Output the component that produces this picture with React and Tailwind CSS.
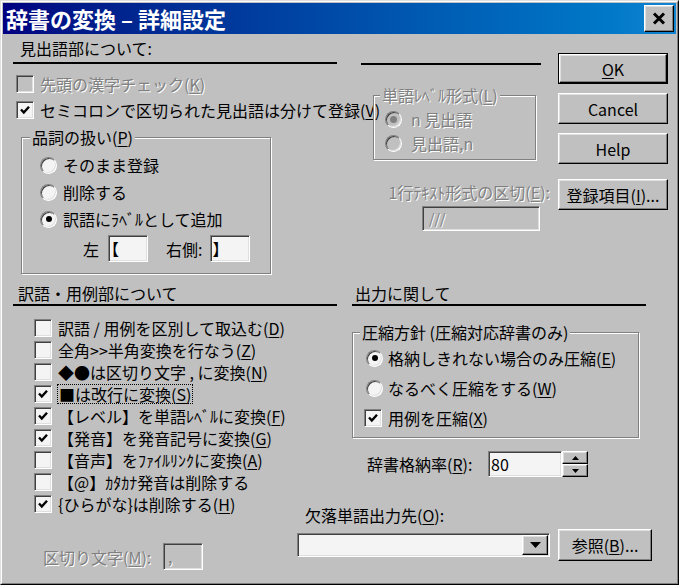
import React from 'react'

// Win9x 風の立体枠
const raised =
  'border border-t-white border-l-white border-r-black border-b-black shadow-[inset_-1px_-1px_0_#808080,inset_1px_1px_0_#dfdfdf]'
const sunken =
  'border border-t-[#808080] border-l-[#808080] border-r-white border-b-white shadow-[inset_1px_1px_0_#404040,inset_-1px_-1px_0_#dfdfdf]'
const dim = 'text-[#808080] [text-shadow:1px_1px_0_#fff]'

const U = ({ children }) => <span className="underline underline-offset-[2px]">{children}</span>

function Check({ checked, disabled }) {
  return (
    <div
      className={`w-[18px] h-[18px] shrink-0 flex items-center justify-center ${sunken} ${
        disabled ? 'bg-[#c0c0c0]' : 'bg-[#f4f4f4]'
      }`}
    >
      {checked && (
        <svg width="12" height="12" viewBox="0 0 12 12">
          <path d="M2 5.5 L4.8 8.5 L10 2.8" stroke="#000" strokeWidth="2.4" fill="none" />
        </svg>
      )}
    </div>
  )
}

function Radio({ on, disabled }) {
  return (
    <div
      className={`w-[17px] h-[17px] shrink-0 rounded-full flex items-center justify-center ${sunken} ${
        disabled ? 'bg-[#c0c0c0]' : 'bg-[#f4f4f4]'
      }`}
    >
      {on && <div className={`rounded-full ${disabled ? 'w-[7px] h-[7px] bg-[#808080]' : 'w-[6px] h-[6px] bg-black'}`} />}
    </div>
  )
}

function Group({ label, disabled, className = '', legendClass = 'ml-[8px]', children }) {
  return (
    <fieldset
      className={`border border-[#808080] shadow-[inset_1px_1px_0_#fff,1px_1px_0_#fff] ${className}`}
    >
      <legend className={`px-[2px] leading-[20px] bg-[#c0c0c0] whitespace-nowrap ${legendClass} ${disabled ? dim : ''}`}>
        {label}
      </legend>
      {children}
    </fieldset>
  )
}

function Btn({ children, className = '', def }) {
  const inner = (
    <div className={`w-full h-full flex items-center justify-center bg-[#c0c0c0] ${raised}`}>{children}</div>
  )
  return def ? (
    <div className={`border border-black ${className}`}>{inner}</div>
  ) : (
    <div className={className}>{inner}</div>
  )
}

function CheckRow({ checked, children, focus }) {
  return (
    <div className="h-[18px] flex items-center whitespace-nowrap">
      <Check checked={checked} />
      <span className={`ml-[6px] leading-[18px] ${focus ? 'outline outline-1 outline-dotted outline-black px-px' : ''}`}>
        {children}
      </span>
    </div>
  )
}

export default function App() {
  return (
    <div className="w-[679px] h-[585px] border border-t-[#dfdfdf] border-l-[#dfdfdf] border-r-black border-b-black font-['Noto_Sans_CJK_JP',sans-serif] text-[16px] text-black">
      <div className="h-full border border-t-white border-l-white border-r-[#808080] border-b-[#808080] bg-[#c0c0c0] p-px flex flex-col">
        {/* タイトルバー */}
        <div className="h-[31px] shrink-0 flex items-center justify-between bg-linear-to-r from-[#000080] to-[#1084d0]">
          <span className="pl-[3px] text-white font-bold text-[22px] leading-[31px] whitespace-nowrap">
            辞書の変換 – 詳細設定
          </span>
          <div className={`mr-[2px] w-[30px] h-[27px] flex items-center justify-center bg-[#c0c0c0] ${raised}`}>
            <svg width="14" height="13" viewBox="0 0 14 13">
              <path d="M2 1.5 L12 11.5 M12 1.5 L2 11.5" stroke="#000" strokeWidth="3" />
            </svg>
          </div>
        </div>

        <div className="flex-1 flex flex-col pl-[10px]">
          {/* 上段 */}
          <div className="h-[249px] shrink-0 flex">
            <div className="w-[324px]">
              <div className="pt-[4px] pl-[7px] leading-[20px]">見出語部について:</div>
              <div className="mt-[4px] h-[2px] bg-black" />
              <div className="mt-[11px] h-[18px] pl-[3px] flex items-center whitespace-nowrap">
                <Check disabled />
                <span className={`ml-[6px] ${dim}`}>
                  先頭の漢字チェック(<U>K</U>)
                </span>
              </div>
              <div className="mt-[8px] h-[18px] pl-[3px] flex items-center whitespace-nowrap">
                <Check checked />
                <span className="ml-[6px]">
                  セミコロンで区切られた見出語は分けて登録(<U>V</U>)
                </span>
              </div>
              <Group label={<>品詞の扱い(<U>P</U>)</>} className="mt-[8px] ml-[8px] w-[250px]">
                <div className="pl-[18px] pb-[11px]">
                  <div className="mt-[8px] h-[20px] flex items-center gap-[6px]">
                    <Radio />
                    <span>そのまま登録</span>
                  </div>
                  <div className="mt-[7px] h-[20px] flex items-center gap-[6px]">
                    <Radio />
                    <span>削除する</span>
                  </div>
                  <div className="mt-[7px] h-[20px] flex items-center gap-[6px] whitespace-nowrap">
                    <Radio on />
                    <span>訳語にﾗﾍﾞﾙとして追加</span>
                  </div>
                  <div className="mt-[6px] h-[27px] flex items-center pl-[43px] whitespace-nowrap">
                    <span>左</span>
                    <div className={`ml-[9px] w-[40px] h-[27px] bg-[#f4f4f4] leading-[25px] ${sunken}`}>
                      <span className="inline-block -ml-[6px]">【</span>
                    </div>
                    <span className="ml-[18px]">右側:</span>
                    <div className={`ml-[8px] w-[40px] h-[27px] bg-[#f4f4f4] pl-[1px] leading-[25px] ${sunken}`}>】</div>
                  </div>
                </div>
              </Group>
            </div>

            <div className="ml-[24px] w-[189px] flex flex-col">
              <div className="mt-[29px] w-[180px] h-[2px] bg-black" />
              <Group
                label={<>単語ﾚﾍﾞﾙ形式(<U>L</U>)</>}
                disabled
                legendClass="ml-[6px]"
                className="mt-[20px] ml-[12px] w-[163px]"
              >
                <div className="pl-[11px] pb-[6px]">
                  <div className="mt-[4px] h-[20px] flex items-center gap-[9px]">
                    <Radio on disabled />
                    <span className={dim}>n 見出語</span>
                  </div>
                  <div className="mt-[4px] h-[20px] flex items-center gap-[9px]">
                    <Radio disabled />
                    <span className={dim}>見出語,n</span>
                  </div>
                </div>
              </Group>
              <div className={`mt-[22px] leading-[20px] text-right whitespace-nowrap ${dim}`}>
                1行ﾃｷｽﾄ形式の区切(<U>E</U>):
              </div>
              <div className={`mt-[4px] self-end mr-[10px] w-[118px] h-[25px] bg-[#c0c0c0] pl-[6px] leading-[23px] text-[14px] ${dim} ${sunken}`}>
                ///
              </div>
            </div>

            <div className="ml-[8px] w-[110px] pt-[19px] flex flex-col">
              <Btn def className="h-[31px]">
                <span>
                  <U>O</U>K
                </span>
              </Btn>
              <Btn className="mt-[9px] h-[31px]">Cancel</Btn>
              <Btn className="mt-[9px] h-[31px]">Help</Btn>
              <Btn className="mt-[15px] h-[31px]">
                <span className="whitespace-nowrap">
                  登録項目(<U>I</U>)...
                </span>
              </Btn>
            </div>
          </div>

          {/* 下段 */}
          <div className="flex-1 flex">
            <div className="w-[284px]">
              <div className="pl-[5px] leading-[20px] whitespace-nowrap">訳語・用例部について</div>
              <div className="mt-[1px] w-[324px] h-[2px] bg-black" />
              <div className="mt-[13px] pl-[21px] flex flex-col gap-[4px]">
                <CheckRow>
                  訳語 / 用例を区別して取込む(<U>D</U>)
                </CheckRow>
                <CheckRow>
                  全角&gt;&gt;半角変換を行なう(<U>Z</U>)
                </CheckRow>
                <CheckRow>
                  ◆●は区切り文字 , に変換(<U>N</U>)
                </CheckRow>
                <CheckRow checked focus>
                  ■は改行に変換(<U>S</U>)
                </CheckRow>
                <CheckRow checked>
                  【レベル】を単語ﾚﾍﾞﾙに変換(<U>F</U>)
                </CheckRow>
                <CheckRow checked>
                  【発音】を発音記号に変換(<U>G</U>)
                </CheckRow>
                <CheckRow>
                  【音声】をﾌｧｲﾙﾘﾝｸに変換(<U>A</U>)
                </CheckRow>
                <CheckRow>【@】ｶﾀｶﾅ発音は削除する</CheckRow>
                <CheckRow checked>
                  {'{'}ひらがな{'}'}は削除する(<U>H</U>)
                </CheckRow>
              </div>
              <div className="mt-[30px] h-[27px] pl-[30px] flex items-center whitespace-nowrap">
                <span className={`w-[120px] ${dim}`}>
                  区切り文字(<U>M</U>):
                </span>
                <div className={`w-[40px] h-[27px] bg-[#c0c0c0] pl-[4px] leading-[25px] ${dim} ${sunken}`}>,</div>
              </div>
            </div>

            <div className="flex-1">
              <div className="pl-[58px] leading-[20px]">出力に関して</div>
              <div className="mt-[1px] ml-[55px] w-[294px] h-[2px] bg-black" />
              <Group
                label="圧縮方針 (圧縮対応辞書のみ)"
                legendClass="ml-[7px]"
                className="mt-[16px] ml-[55px] w-[287px]"
              >
                <div className="pl-[13px] pb-[9px]">
                  <div className="mt-[6px] h-[20px] flex items-center gap-[5px] whitespace-nowrap">
                    <Radio on />
                    <span>
                      格納しきれない場合のみ圧縮(<U>E</U>)
                    </span>
                  </div>
                  <div className="mt-[10px] h-[20px] flex items-center gap-[5px] whitespace-nowrap">
                    <Radio />
                    <span>
                      なるべく圧縮をする(<U>W</U>)
                    </span>
                  </div>
                  <div className="mt-[10px] h-[20px] flex items-center gap-[6px] -ml-[2px] whitespace-nowrap">
                    <Check checked />
                    <span>
                      用例を圧縮(<U>X</U>)
                    </span>
                  </div>
                </div>
              </Group>
              <div className="mt-[13px] h-[26px] pl-[70px] flex items-center whitespace-nowrap">
                <span className="w-[121px]">
                  辞書格納率(<U>R</U>):
                </span>
                <div className={`w-[74px] h-[26px] bg-[#f4f4f4] pl-[2px] leading-[24px] ${sunken}`}>80</div>
                <div className="w-[26px] h-[26px] flex flex-col">
                  <div className={`h-[13px] flex items-center justify-center bg-[#c0c0c0] ${raised}`}>
                    <svg width="7" height="4" viewBox="0 0 7 4">
                      <path d="M3.5 0 L7 4 L0 4 Z" fill="#000" />
                    </svg>
                  </div>
                  <div className={`h-[13px] flex items-center justify-center bg-[#c0c0c0] ${raised}`}>
                    <svg width="7" height="4" viewBox="0 0 7 4">
                      <path d="M0 0 L7 0 L3.5 4 Z" fill="#000" />
                    </svg>
                  </div>
                </div>
              </div>
              <div className="mt-[28px] pl-[8px] leading-[20px] whitespace-nowrap">
                欠落単語出力先(<U>O</U>):
              </div>
              <div className="mt-[4px] flex items-center gap-[8px]">
                <div className={`w-[253px] h-[24px] bg-[#f4f4f4] flex justify-end p-[1px] ${sunken}`}>
                  <div className={`w-[26px] h-full flex items-center justify-center bg-[#c0c0c0] ${raised}`}>
                    <svg width="11" height="6" viewBox="0 0 11 6">
                      <path d="M0 0 L11 0 L5.5 6 Z" fill="#000" />
                    </svg>
                  </div>
                </div>
                <Btn className="w-[94px] h-[32px]">
                  <span className="whitespace-nowrap">
                    参照(<U>B</U>)...
                  </span>
                </Btn>
              </div>
            </div>
          </div>
        </div>
      </div>
    </div>
  )
}
